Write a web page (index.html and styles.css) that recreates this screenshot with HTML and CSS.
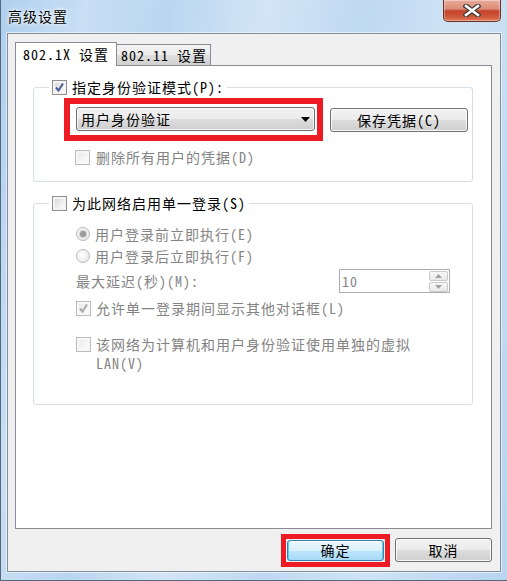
FILE: index.html
```html
<!DOCTYPE html>
<html lang="zh-CN">

<head>
    <meta charset="UTF-8" />
    <title>高级设置</title>
    <link rel="stylesheet" href="styles.css">
</head>

<body>
    <div class="window">
        <!-- Title bar -->
        <div class="titlebar">
            <span class="title">高级设置</span>
            <button type="button" class="close-btn" aria-label="关闭">
                <svg width="18" height="13" viewBox="0 0 18 13">
                    <path d="M3 2 L15 11 M15 2 L3 11" stroke="#3b3b3b" stroke-width="5" stroke-linecap="square" />
                    <path d="M3 2 L15 11 M15 2 L3 11" stroke="#ffffff" stroke-width="2.6" stroke-linecap="square" />
                </svg>
            </button>
        </div>

        <div class="client">
            <!-- Tabs -->
            <div class="tabs">
                <div class="tab tab-active">802.1X 设置</div>
                <div class="tab">802.11 设置</div>
            </div>

            <div class="tab-page">
                <!-- Authentication mode -->
                <fieldset class="group">
                    <legend class="group-legend">
                        <span class="check">
                            <svg width="13" height="13" viewBox="0 0 13 13"><path d="M3 6.5 L5.5 9.5 L10 2.5" fill="none" stroke="#4a5f99" stroke-width="2" /></svg>
                        </span>
                        <span>指定身份验证模式(P):</span>
                    </legend>
                    <div class="cred-row">
                        <div class="mark">
                            <div class="combo">
                                <span>用户身份验证</span>
                                <svg class="combo-arrow" width="9" height="5" viewBox="0 0 9 5"><path d="M0 0 H9 L4.5 5 Z" fill="#000" /></svg>
                            </div>
                        </div>
                        <button type="button" class="btn btn-save">保存凭据(C)</button>
                    </div>
                    <div class="option disabled opt-delete">
                        <span class="check check-off"></span>
                        <span>删除所有用户的凭据(D)</span>
                    </div>
                </fieldset>

                <!-- Single sign on -->
                <fieldset class="group group-sso">
                    <legend class="group-legend">
                        <span class="check"></span>
                        <span>为此网络启用单一登录(S)</span>
                    </legend>
                    <div class="option disabled opt-before">
                        <span class="radio radio-on"></span>
                        <span>用户登录前立即执行(E)</span>
                    </div>
                    <div class="option disabled opt-after">
                        <span class="radio"></span>
                        <span>用户登录后立即执行(F)</span>
                    </div>
                    <div class="delay-row disabled">
                        <span>最大延迟(秒)(M):</span>
                        <div class="spin">
                            <span>10</span>
                            <div class="spin-btns">
                                <span class="spin-btn"><svg width="7" height="4" viewBox="0 0 7 4"><path d="M0 4 H7 L3.5 0 Z" fill="#a0a0a0" /></svg></span>
                                <span class="spin-btn"><svg width="7" height="4" viewBox="0 0 7 4"><path d="M0 0 H7 L3.5 4 Z" fill="#a0a0a0" /></svg></span>
                            </div>
                        </div>
                    </div>
                    <div class="option disabled opt-allow">
                        <span class="check check-off">
                            <svg width="13" height="13" viewBox="0 0 13 13"><path d="M3 6.5 L5.5 9.5 L10 2.5" fill="none" stroke="#a9a9a9" stroke-width="2" /></svg>
                        </span>
                        <span>允许单一登录期间显示其他对话框(L)</span>
                    </div>
                    <div class="option disabled opt-vlan">
                        <span class="check check-off"></span>
                        <span class="vlan-text">该网络为计算机和用户身份验证使用单独的虚拟 LAN(V)</span>
                    </div>
                </fieldset>
            </div>

            <!-- Dialog buttons -->
            <div class="footer">
                <div class="mark-ok">
                    <button type="button" class="btn btn-ok">确定</button>
                </div>
                <button type="button" class="btn btn-cancel">取消</button>
            </div>
        </div>
    </div>
</body>

</html>
```

FILE: styles.css
```css
* {
    box-sizing: border-box;
}

html,
body {
    margin: 0;
}

body {
    font-family: "Noto Sans Mono CJK SC", "Noto Sans CJK SC", sans-serif;
    font-size: 14px;
    letter-spacing: 1px;
    line-height: 16px;
    color: #000;
}

/* Aero glass frame */
.window {
    width: 507px;
    height: 581px;
    display: flex;
    flex-direction: column;
    background: linear-gradient(100deg, #aecfee 0%, #c8dff4 14%, #bad6ef 28%, #d2e5f6 44%, #bfd9f1 60%, #cee3f5 76%, #b8d4ef 100%);
    box-shadow: inset 1px -1px 0 #56677d;
}

.titlebar {
    height: 33px;
    display: flex;
    align-items: flex-start;
}

.title {
    padding: 8px 0 0 8px;
    text-shadow: 0 0 6px #fff, 0 0 3px #fff;
}

.close-btn {
    margin-left: auto;
    margin-right: 6px;
    width: 58px;
    height: 22px;
    padding: 0;
    border: 1px solid #6b2f25;
    border-top: none;
    border-radius: 0 0 5px 5px;
    background: linear-gradient(#e9ab9b, #dc8c76 42%, #c5442c 52%, #d15a3d 82%, #e07f5c);
    box-shadow: inset 0 0 0 1px rgba(255, 255, 255, 0.35);
    display: flex;
    align-items: center;
    justify-content: center;
}

/* Dialog client area */
.client {
    flex: 1;
    margin: 0 6px 9px 7px;
    padding: 8px 8px 0 7px;
    background: #f0f0f0;
    border: 1px solid #838d9a;
    box-shadow: 0 0 0 1px rgba(255, 255, 255, 0.55);
    display: flex;
    flex-direction: column;
}

.tabs {
    display: flex;
    align-items: flex-end;
    height: 24px;
    margin-bottom: -1px;
    position: relative;
    z-index: 1;
}

.tab {
    width: 94px;
    height: 21px;
    margin-bottom: 1px;
    padding: 2px 0 0 4px;
    border: 1px solid #898c95;
    border-left: none;
    border-bottom: none;
    background: linear-gradient(#f3f3f3, #ebebeb 50%, #dedede 51%, #d0d0d0);
}

.tab-active {
    width: 102px;
    height: 24px;
    margin-bottom: 0;
    padding: 3px 0 0 7px;
    border-left: 1px solid #898c95;
    background: #fff;
}

.tab-page {
    flex: 1;
    background: #fff;
    border: 1px solid #898c95;
    padding: 13px 18px 0 17px;
}

/* Group boxes */
.group {
    margin: 0;
    padding: 0;
    min-width: 0;
    border: 1px solid #d5dfe5;
    border-radius: 3px;
}

.group-sso {
    margin-top: 13px;
}

.group-legend {
    display: flex;
    align-items: center;
    gap: 5px;
    height: 16px;
    margin-left: 15px;
    padding: 0 3px;
}

.check {
    width: 15px;
    height: 15px;
    flex: none;
    border: 1px solid #8e8f8f;
    background: linear-gradient(135deg, #d3d3d3, #f7f7f7 75%);
    box-shadow: inset 0 0 0 2px #f4f4f4;
    display: flex;
    align-items: center;
    justify-content: center;
}

.check-off {
    border-color: #bcbcbc;
    background: linear-gradient(135deg, #e6e6e6, #fafafa 75%);
    box-shadow: inset 0 0 0 2px #f7f7f7;
}

.radio {
    width: 14px;
    height: 14px;
    flex: none;
    border: 1px solid #b9b9b9;
    border-radius: 50%;
    background: radial-gradient(circle at 40% 40%, #fff, #e4e4e4);
    display: flex;
    align-items: center;
    justify-content: center;
}

.radio-on::after {
    content: "";
    width: 6px;
    height: 6px;
    border-radius: 50%;
    background: #9b9b9b;
    box-shadow: 0 0 0 1px #d0d0d0;
}

.cred-row {
    display: flex;
    align-items: center;
    margin: 3px 0 0 30px;
}

/* red annotation frames */
.mark {
    width: 259px;
    padding: 3px 2px 4px 6px;
    border: 6px solid #ed1c24;
}

.mark-ok {
    padding: 1px;
    border: 5px solid #ed1c24;
}

.combo {
    height: 24px;
    padding-left: 4px;
    border: 1px solid #707070;
    border-radius: 3px;
    background: linear-gradient(#f2f2f2, #ebebeb 50%, #dddddd 51%, #cfcfcf);
    box-shadow: inset 0 0 0 1px rgba(255, 255, 255, 0.7);
    display: flex;
    align-items: center;
}

.combo-arrow {
    margin-left: auto;
    margin-right: 4px;
}

.btn {
    height: 24px;
    padding: 0;
    font: inherit;
    letter-spacing: inherit;
    color: #000;
    border: 1px solid #707070;
    border-radius: 3px;
    background: linear-gradient(#f2f2f2, #ebebeb 50%, #dddddd 51%, #cfcfcf);
    box-shadow: inset 0 0 0 1px rgba(255, 255, 255, 0.8);
}

.btn-save {
    width: 138px;
    margin-left: 7px;
}

.option {
    display: flex;
    align-items: center;
    gap: 5px;
    height: 16px;
}

.disabled {
    color: #838383;
}

.opt-delete {
    gap: 6px;
    margin: 8px 0 16px 41px;
}

.opt-before {
    margin: 15px 0 0 42px;
}

.opt-after {
    margin: 6px 0 0 42px;
}

.delay-row {
    display: flex;
    align-items: center;
    justify-content: space-between;
    height: 24px;
    margin: 5px 22px 0 42px;
}

.spin {
    width: 111px;
    height: 24px;
    padding-left: 2px;
    border: 1px solid #abadb3;
    background: #fff;
    display: flex;
    align-items: center;
}

.spin-btns {
    margin-left: auto;
    margin-right: 1px;
    display: flex;
    flex-direction: column;
    gap: 1px;
}

.spin-btn {
    width: 19px;
    height: 10px;
    border: 1px solid #cacaca;
    border-radius: 2px;
    background: linear-gradient(#f7f7f7, #e9e9e9);
    display: flex;
    align-items: center;
    justify-content: center;
}

.opt-allow {
    margin: 7px 0 0 42px;
}

.opt-vlan {
    height: auto;
    align-items: flex-start;
    line-height: 19px;
    margin: 19px 0 31px 42px;
}

.opt-vlan .check {
    margin-top: 2px;
}

.vlan-text {
    width: 320px;
}

/* OK / Cancel */
.footer {
    height: 42px;
    display: flex;
    justify-content: flex-end;
    align-items: center;
    gap: 5px;
}

.btn-ok {
    width: 97px;
    height: 21px;
    border-color: #3c7fb1;
    background: linear-gradient(#eaf6fd, #d9f0fc 50%, #bee6fd 51%, #a7d9f5);
    box-shadow: inset 1px 0 0 #48d3f5, inset -1px 0 0 #48d3f5, inset 0 1px 0 #ffffff;
}

.btn-cancel {
    width: 97px;
}
```
